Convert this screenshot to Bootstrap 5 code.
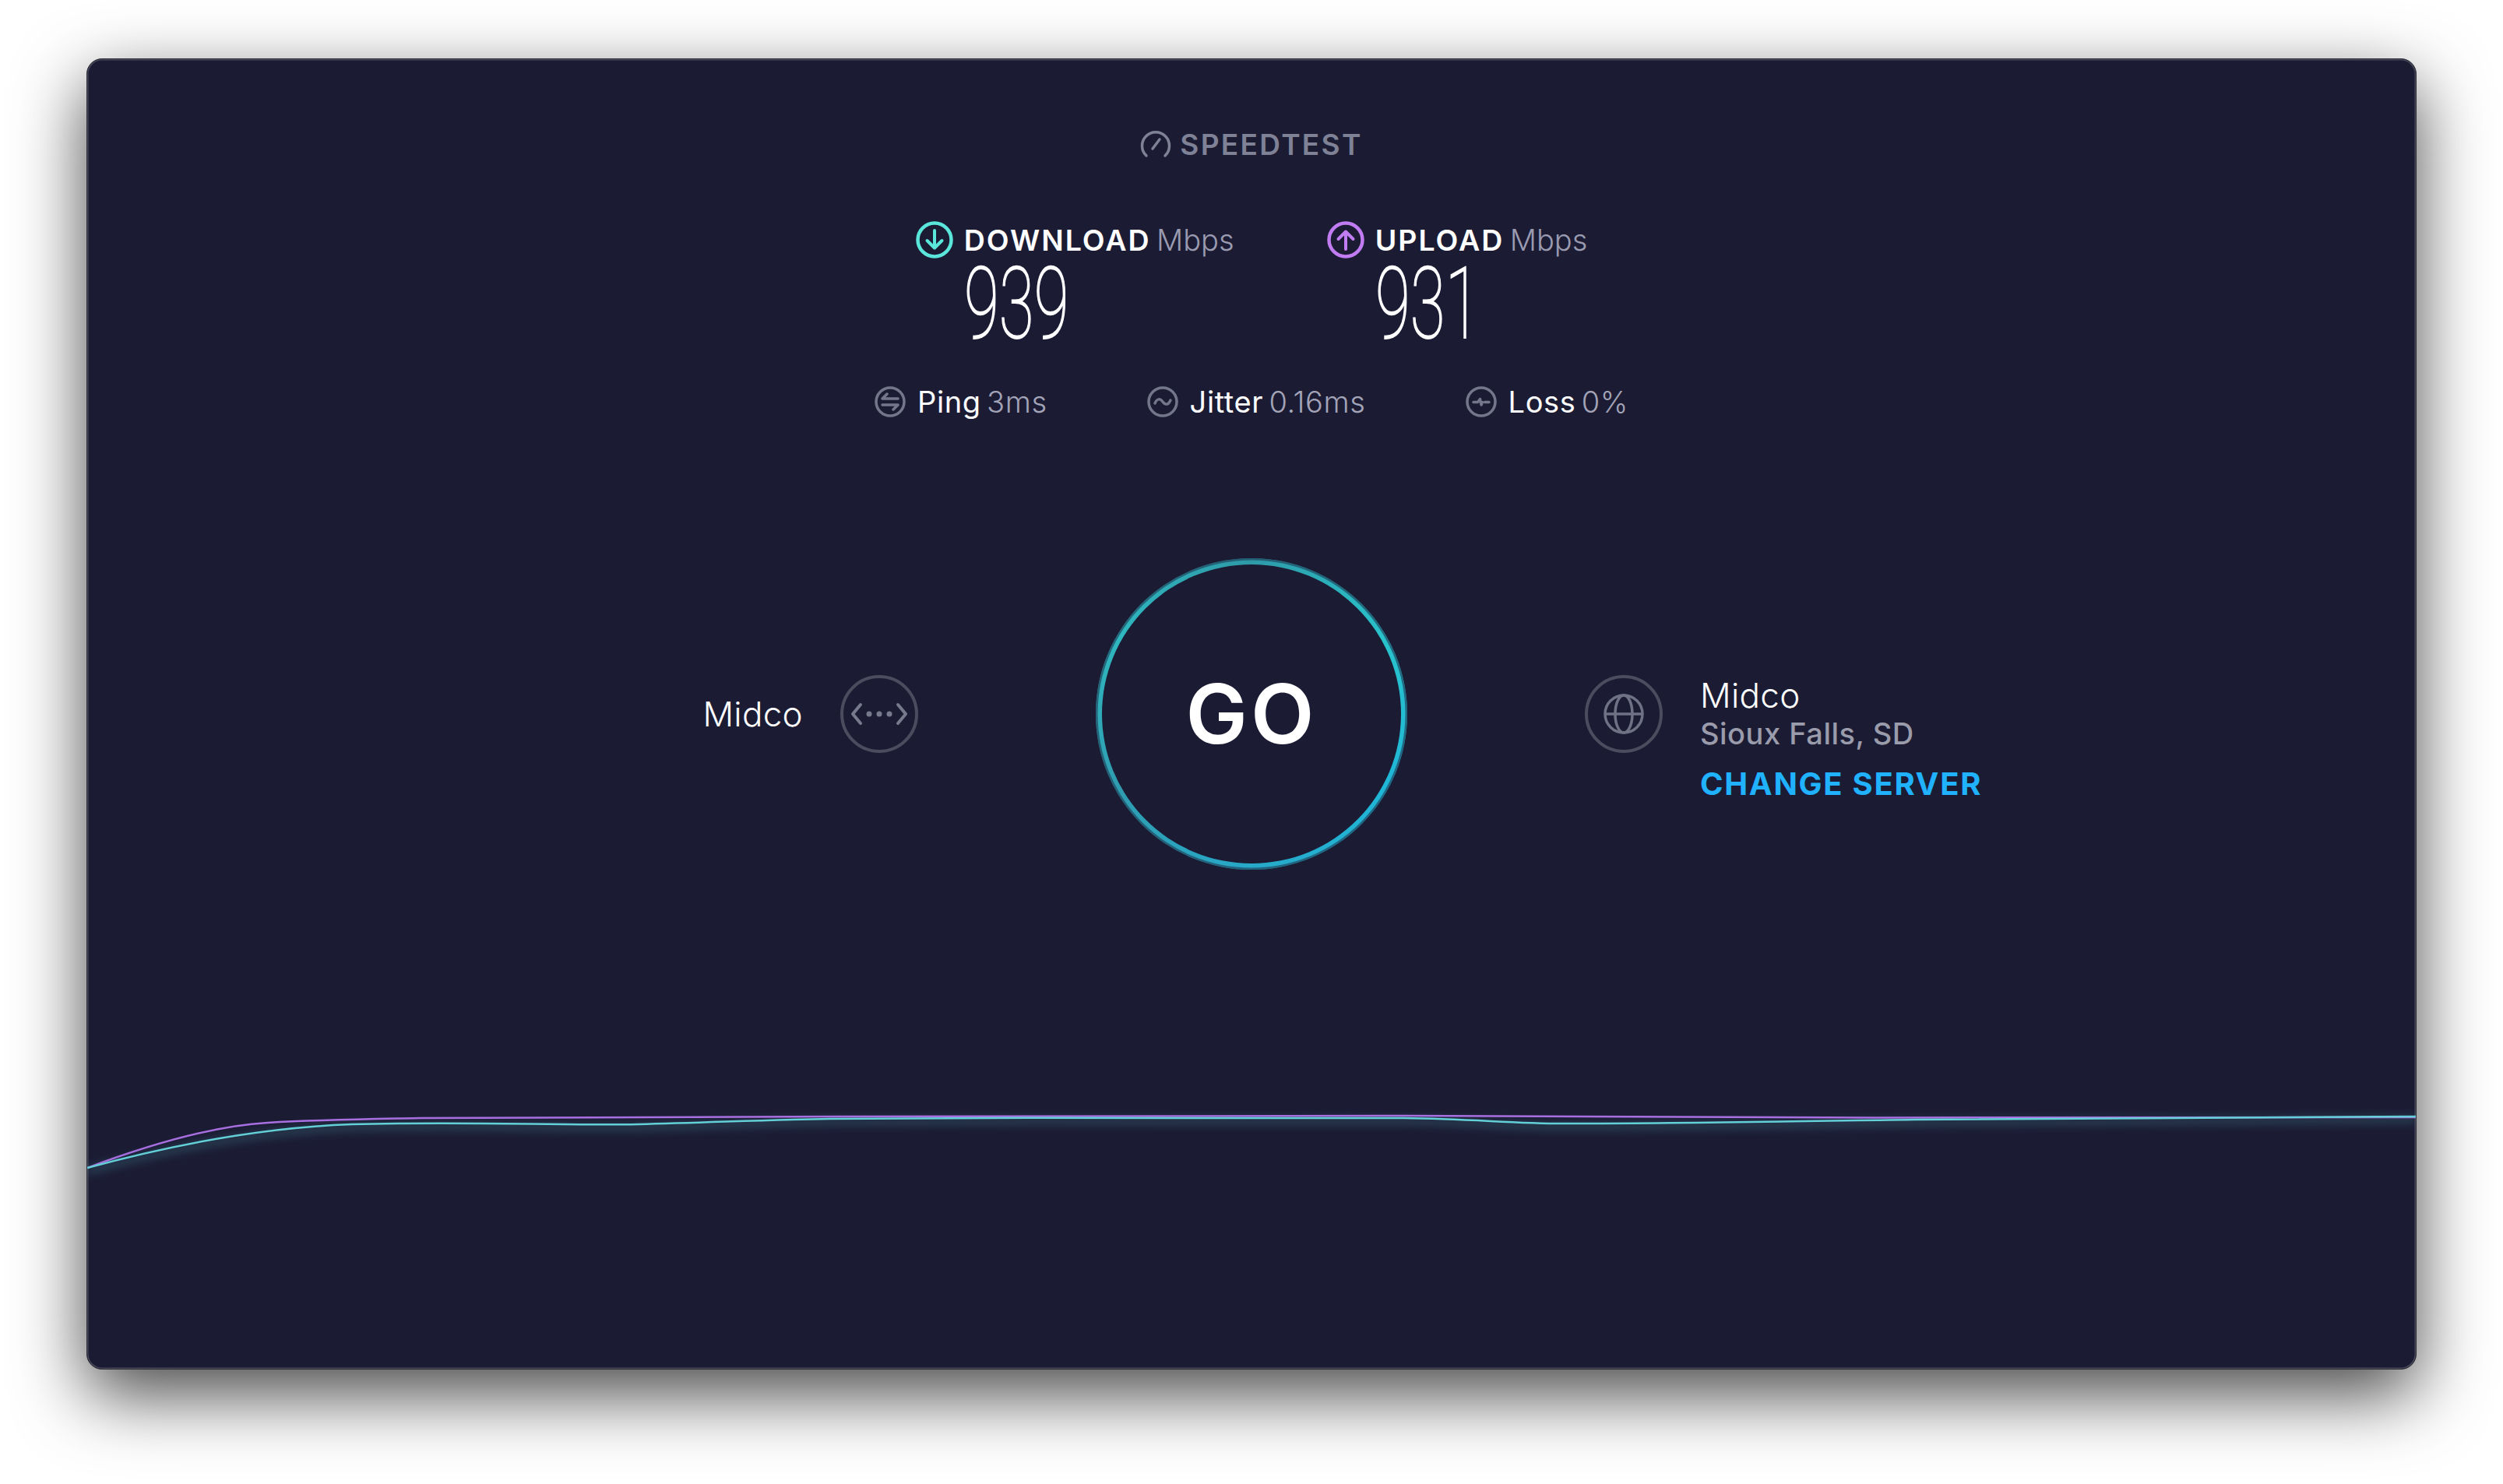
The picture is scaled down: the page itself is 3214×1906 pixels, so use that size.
<!DOCTYPE html>
<html lang="en">
  <head>
    <meta charset="UTF-8" />
    <title>Speedtest</title>
    <link href="https://cdn.jsdelivr.net/npm/bootstrap@5.3.0/dist/css/bootstrap.min.css" rel="stylesheet" />
    <style>
      body {
        background: #fff;
        font-family: Inter, "Liberation Sans", sans-serif;
        margin: 0;
      }
      .st-page {
        padding: 75px 111px 147px;
        min-height: 1906px;
        overflow: hidden;
      }
      .st-window {
        height: 1684px;
        background: #1b1c34;
        border: 1px solid #2c2c36;
        border-radius: 20px;
        box-shadow: inset 0 0 0 1.5px #48495a, 0 32px 90px rgba(0, 0, 0, 0.72);
        overflow: hidden;
        color: #fff;
      }
      .st-logo {
        margin-top: 90px;
        height: 40px;
        gap: 11px;
        color: #7f8296;
        font-size: 37px;
        font-weight: 600;
        line-height: 40px;
        letter-spacing: 2.3px;
      }
      .st-results {
        margin-top: 80px;
        gap: 119px;
      }
      .st-label {
        height: 44px;
        line-height: 44px;
        gap: 14px;
        font-size: 37.5px;
        font-weight: 600;
        letter-spacing: 2px;
      }
      .st-unit {
        font-size: 38px;
        font-weight: 300;
        letter-spacing: 0;
        color: #9a9bb0;
        margin-left: -4px;
      }
      .st-speed {
        display: block;
        height: 104px;
        margin-left: 62px;
        font-family: Roboto, sans-serif;
        font-size: 128px;
        font-weight: 100;
        line-height: 120px;
        -webkit-text-stroke: 1.8px #fff;
        transform: scaleX(0.64);
        transform-origin: left center;
      }
      .st-stats {
        margin-top: 60px;
        gap: 128px;
      }
      .st-stat {
        height: 44px;
        line-height: 44px;
        gap: 15px;
        font-size: 38px;
        font-weight: 400;
        letter-spacing: 0.6px;
        word-spacing: -4px;
      }
      .st-stat span {
        font-weight: 300;
        color: #a3a4b8;
      }
      .st-middle {
        margin-top: 179px;
        display: grid;
        grid-template-columns: 1fr 400px 1fr;
        column-gap: 228px;
        align-items: center;
      }
      .st-go {
        width: 400px;
        height: 400px;
        padding: 0;
        border: 0;
        border-radius: 50%;
        background: conic-gradient(#2e9aa8, #29c3cc, #1fb6d8, #27a9c9, #2f9db0, #2fb7bf, #2e9aa8);
        box-shadow: inset 0 0 0 2.5px rgba(32, 70, 96, 0.7);
        color: #fff;
        position: relative;
        font-size: 106px;
        font-weight: 600;
        line-height: 400px;
        letter-spacing: 4px;
      }
      .st-go::before {
        content: "";
        position: absolute;
        inset: 8px;
        border-radius: 50%;
        background: #1b1c34;
      }
      .st-go b {
        position: relative;
        font-weight: 600;
      }
      .st-isp {
        gap: 48px;
        font-size: 44px;
        font-weight: 300;
        letter-spacing: 0.3px;
      }
      .st-ring {
        width: 100px;
        height: 100px;
        flex: none;
      }
      .st-server {
        margin-top: 62px;
      }
      .st-city {
        font-size: 38px;
        line-height: 46px;
        font-weight: 500;
        letter-spacing: 0.5px;
        color: #9a9bab;
      }
      .st-host {
        font-size: 44px;
        line-height: 52px;
        font-weight: 300;
      }
      .st-change {
        display: block;
        margin-top: 20px;
        font-size: 40px;
        line-height: 44px;
        font-weight: 700;
        letter-spacing: 1.7px;
        color: #20b1ff;
      }
      .st-chart {
        margin-top: auto;
        display: block;
        width: 100%;
        height: 380px;
      }
    </style>
  </head>
  <body>
    <div class="st-page">
      <main class="st-window d-flex flex-column">
        <div class="st-logo d-flex justify-content-center align-items-center">
          <svg width="40" height="40" viewBox="0 0 40 40" fill="none" stroke="#7f8296" stroke-width="3.5" stroke-linecap="round">
            <path d="M8 34A17.5 17.5 0 1 1 32 34" />
            <path d="M16 25L25 13" />
          </svg>
          SPEEDTEST
        </div>

        <div class="st-results d-flex justify-content-center">
          <div>
            <div class="st-label d-flex align-items-center">
              <svg width="48" height="48" viewBox="0 0 48 48" fill="none" stroke="#5be6dc" stroke-linecap="round" stroke-linejoin="round">
                <circle cx="24" cy="24" r="21.500" stroke-width="4.500" />
                <path d="M24 12V34M14.500 25L24 34.500L33.500 25" stroke-width="4" />
              </svg>
              <div>DOWNLOAD <span class="st-unit">Mbps</span></div>
            </div>
            <div class="st-speed">939</div>
          </div>
          <div>
            <div class="st-label d-flex align-items-center">
              <svg width="48" height="48" viewBox="0 0 48 48" fill="none" stroke="#c17cf2" stroke-linecap="round" stroke-linejoin="round">
                <circle cx="24" cy="24" r="21.500" stroke-width="4.500" />
                <path d="M24 36V14M14.500 23L24 13.500L33.500 23" stroke-width="4" />
              </svg>
              <div>UPLOAD <span class="st-unit">Mbps</span></div>
            </div>
            <div class="st-speed">931</div>
          </div>
        </div>

        <div class="st-stats d-flex justify-content-center">
          <div class="st-stat d-flex align-items-center">
            <svg width="40" height="40" viewBox="0 0 40 40" fill="none" stroke="#74778c" stroke-width="3.500" stroke-linecap="round" stroke-linejoin="round">
              <circle cx="20" cy="20" r="18" />
              <path d="M30 16H10L16 10M10 24H30L24 30" />
            </svg>
            <div>Ping <span>3ms</span></div>
          </div>
          <div class="st-stat d-flex align-items-center">
            <svg width="40" height="40" viewBox="0 0 40 40" fill="none" stroke="#74778c" stroke-width="3.500" stroke-linecap="round">
              <circle cx="20" cy="20" r="18" />
              <path d="M10 22C13 15 17 16 20 20S27 25 30 18" />
            </svg>
            <div>Jitter <span>0.16ms</span></div>
          </div>
          <div class="st-stat d-flex align-items-center">
            <svg width="40" height="40" viewBox="0 0 40 40" fill="none" stroke="#74778c" stroke-width="3.500" stroke-linecap="round" stroke-linejoin="round">
              <circle cx="20" cy="20" r="18" />
              <path d="M10 20.500H15.500L18.500 16.500L20 24L21.500 20.500M24.500 20.500H30" />
            </svg>
            <div>Loss <span>0%</span></div>
          </div>
        </div>

        <div class="st-middle">
          <div class="st-isp d-flex justify-content-end align-items-center">
            <div>Midco</div>
            <svg class="st-ring" viewBox="0 0 100 100" fill="none" stroke="#4b4c5e" stroke-width="4" stroke-linecap="round" stroke-linejoin="round">
              <circle cx="50" cy="50" r="48" />
              <path d="M26 38L16 50L26 62M74 38L84 50L74 62" stroke="#777a8c" />
              <circle cx="37" cy="50" r="3.500" fill="#777a8c" stroke="none" />
              <circle cx="50" cy="50" r="3.500" fill="#777a8c" stroke="none" />
              <circle cx="63" cy="50" r="3.500" fill="#777a8c" stroke="none" />
            </svg>
          </div>
          <button type="button" class="st-go"><b>GO</b></button>
          <div class="st-isp d-flex align-items-center">
            <svg class="st-ring" viewBox="0 0 100 100" fill="none" stroke="#4b4c5e" stroke-width="4">
              <circle cx="50" cy="50" r="48" />
              <g stroke="#6f7184" stroke-width="3.500">
                <circle cx="50" cy="50" r="24" />
                <ellipse cx="50" cy="50" rx="11" ry="24" />
                <path d="M26 50H74" />
              </g>
            </svg>
            <div class="st-server">
              <div class="st-host">Midco</div>
              <div class="st-city">Sioux Falls, SD</div>
              <a href="#" class="st-change text-decoration-none">CHANGE SERVER</a>
            </div>
          </div>
        </div>

        <svg class="st-chart" viewBox="0 0 2992 380" preserveAspectRatio="none" fill="none">
          <defs>
            <filter id="stBlur" x="-5%" y="-100%" width="110%" height="300%">
              <feGaussianBlur stdDeviation="6" />
            </filter>
          </defs>
          <path d="M0 126C110 96 230 74 340 70C500 66 600 72 708 70C800 68 870 64 954 63C1200 61 1500 62 1692 62C1780 63 1830 69 1897 69C2050 69 2200 66 2348 64C2600 62 2800 62 2992 60" stroke="#63cfd6" stroke-width="6" opacity="0.3" filter="url(#stBlur)" />
          <path d="M0 122C80 92 160 68 232 64C300 60 380 59 428 58C800 56 1500 55 1692 55C2100 58 2600 58 2992 57" stroke="#a86fe0" stroke-width="2.500" />
          <path d="M0 122C110 92 230 70 340 66C500 62 600 68 708 66C800 64 870 60 954 59C1200 57 1500 58 1692 58C1780 59 1830 65 1897 65C2050 65 2200 62 2348 60C2600 58 2800 58 2992 56" stroke="#63cfd6" stroke-width="2.500" />
        </svg>
      </main>
    </div>
    <script src="https://cdn.jsdelivr.net/npm/bootstrap@5.3.0/dist/js/bootstrap.bundle.min.js"></script>
  </body>
</html>
